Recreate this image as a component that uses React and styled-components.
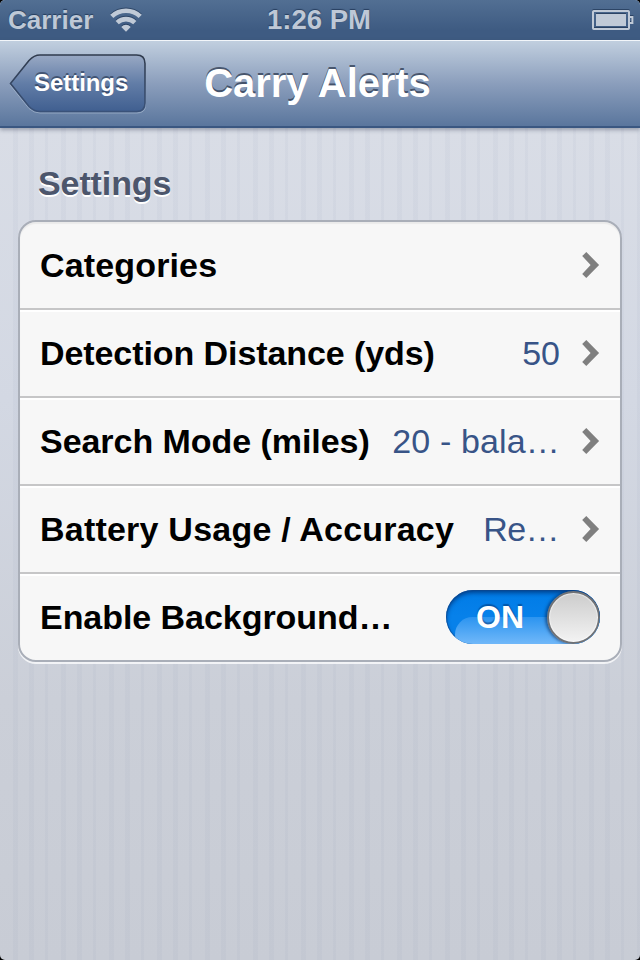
import React from "react";
import styled, { createGlobalStyle } from "styled-components";

const GlobalStyle = createGlobalStyle`
  body { margin: 0; background: #000; }
  * { box-sizing: border-box; }
`;

const Screen = styled.div`
  width: 640px;
  height: 960px;
  overflow: hidden;
  border-radius: 5px;
  display: flex;
  flex-direction: column;
  font-family: "Liberation Sans", Arial, Helvetica, sans-serif;
  background:
    repeating-linear-gradient(90deg, transparent 0 13px, rgba(110, 125, 160, 0.05) 13px 18px, transparent 18px 29px, rgba(110, 125, 160, 0.05) 29px 34px, transparent 34px 45px, rgba(110, 125, 160, 0.05) 45px 48px),
    linear-gradient(#d9dde6 128px, #d3d8e3 400px, #cbcfd8 700px, #c8ccd5);
`;

const StatusBar = styled.header`
  height: 40px;
  flex: none;
  display: grid;
  grid-template-columns: 1fr auto 1fr;
  align-items: center;
  padding: 0 6px 0 8px;
  background: linear-gradient(#526f93, #3e5b82 75%);
  color: #bec8d6;
  font-weight: bold;
  text-shadow: 0 -1px 1px rgba(20, 40, 70, 0.65);
`;

const Network = styled.div`
  display: flex;
  align-items: center;
  gap: 17px;
`;

const Carrier = styled.span`
  font-size: 26px;
  line-height: 40px;
`;

const Clock = styled.span`
  font-size: 27.5px;
  line-height: 40px;
  margin: 0 4px 0 0;
`;

const StatusIcon = styled.svg`
  display: block;
  filter: drop-shadow(0 -1px 0.5px rgba(20, 40, 70, 0.55));
`;

const BatteryIcon = styled(StatusIcon)`
  justify-self: end;
`;

const NavBar = styled.nav`
  height: 88px;
  flex: none;
  display: grid;
  grid-template-columns: 147px 1fr 152px;
  align-items: center;
  border-top: 1px solid #f2f6fa;
  border-bottom: 2px solid #3a5781;
  background: linear-gradient(#c1cfdf, #8b9ebc 50%, #5a769d);
  box-shadow: 0 2px 4px rgba(60, 70, 90, 0.42);
`;

const BackButton = styled.button`
  width: 138px;
  height: 60px;
  margin: 1px 0 0 9px;
  padding: 0;
  border: 0;
  background: none;
  display: grid;
  font: bold 24px "Liberation Sans", Arial, sans-serif;
  color: #fff;
`;

const BackShape = styled.svg`
  grid-area: 1 / 1;
`;

const BackLabel = styled.span`
  grid-area: 1 / 1;
  z-index: 1;
  text-align: left;
  padding-left: 25px;
  line-height: 57px;
  letter-spacing: -0.05px;
  text-shadow: 0 -2px 0 rgba(35, 50, 75, 0.6);
`;

const Title = styled.h1`
  margin: 0;
  text-align: center;
  color: #fff;
  font-size: 40px;
  line-height: 82px;
  padding-bottom: 2px;
  letter-spacing: -0.1px;
  text-shadow: 0 -2px 0 rgba(45, 58, 80, 0.75);
`;

const Content = styled.main`
  padding: 32px 18px 0;
`;

const SectionTitle = styled.h2`
  margin: 0;
  padding-left: 20px;
  height: 60px;
  font-size: 34px;
  line-height: 46px;
  letter-spacing: -0.1px;
  color: #4c566c;
  text-shadow: 0 2px 0 #fff;
`;

const Card = styled.section`
  height: 442px;
  border: 2px solid #a9aeb8;
  border-radius: 18px;
  background: #f7f7f7;
  box-shadow: 0 2px 0 rgba(255, 255, 255, 0.75), inset 0 2px 1px rgba(0, 0, 0, 0.05);
`;

const Row = styled.div`
  height: 88px;
  display: flex;
  align-items: center;
  padding: 0 20px;
  font-size: 34px;
  line-height: 40px;
  white-space: nowrap;
  border-bottom: 2px solid #c6c6c7;

  &:last-child {
    border-color: transparent;
  }
  & + & {
    box-shadow: inset 0 2px 0 #fff;
  }
`;

const Label = styled.span`
  flex: 1;
  font-weight: bold;
  color: #000;
  letter-spacing: ${(p) => p.$tracking || 0}px;
`;

const Value = styled.span`
  color: #385487;
  margin-right: ${(p) => p.$gap || 22}px;
  letter-spacing: ${(p) => p.$tracking || 0}px;
`;

const Toggle = styled.div`
  width: 154px;
  height: 54px;
  border-radius: 27px;
  display: flex;
  align-items: center;
  justify-content: space-between;
  padding-left: 30px;
  font-size: 32px;
  line-height: 54px;
  font-weight: bold;
  color: #fff;
  text-shadow: 0 -2px 1px rgba(0, 55, 120, 0.55);
  background: linear-gradient(#007be6, #0781ea 49%, #0781ea);
  box-shadow: inset 0 0 0 1px rgba(15, 70, 140, 0.6), inset 0 3px 4px rgba(0, 35, 95, 0.65);
  isolation: isolate;
  position: relative;
  overflow: hidden;

  &::before {
    content: "";
    position: absolute;
    z-index: -1;
    left: 9px;
    right: 0;
    top: 27px;
    height: 35px;
    border-radius: 18px 0 0 18px;
    background: linear-gradient(#2b94f0, #6fb7f9 75%);
  }
`;

const Knob = styled.span`
  width: 53px;
  height: 53px;
  border-radius: 50%;
  border: 2px solid #707276;
  background: linear-gradient(#cccccc, #f3f3f3);
  box-shadow: inset 0 0 1px 1px rgba(255, 255, 255, 0.6), -2px 0 3px rgba(0, 25, 70, 0.5);
`;

function Wifi() {
  return (
    <StatusIcon width="32" height="24" viewBox="0 0 32 24" fill="none" stroke="#c0cad7" strokeWidth="4.6">
      <path d="M1.800 8.400C9.800 .9 22.200 .9 30.200 8.400" />
      <path d="M7.200 14.600C12.200 9.900 19.800 9.900 24.800 14.600" />
      <path d="M16 23.700l-4.700-4.700c2.700-3 6.700-3 9.400 0z" fill="#c0cad7" stroke="none" />
    </StatusIcon>
  );
}

function Battery() {
  return (
    <BatteryIcon width="42" height="20" viewBox="0 0 42 20" fill="none" stroke="#c0cad7" strokeWidth="2">
      <rect x="1" y="1" width="36" height="18" rx="0.8" />
      <rect x="4" y="4" width="30" height="12" fill="#c0cad7" stroke="none" />
      <path d="M37 7h3.400v6H37" />
    </BatteryIcon>
  );
}

function Chevron() {
  return (
    <svg width="18" height="28" viewBox="0 0 18 28" fill="#7f7f7f">
      <path d="M4.300 1L17.100 14L4.300 27L.2 22.900L8.600 14L.2 5.100Z" />
    </svg>
  );
}

function Back() {
  return (
    <BackButton>
      <BackShape width="138" height="60" viewBox="0 0 138 60">
        <defs>
          <linearGradient id="back" x2="0" y2="1">
            <stop stopColor="#99a9c4" />
            <stop offset=".5" stopColor="#627da7" />
            <stop offset="1" stopColor="#405f90" />
          </linearGradient>
          <linearGradient id="edge" x2="0" y2="1">
            <stop stopColor="#303b4d" />
            <stop offset="1" stopColor="#3a5279" />
          </linearGradient>
        </defs>
        <path d="M1.500 31.500L20 7.500Q25 2 31 2H128Q136.500 2 136.500 10.500V51Q136.500 59 128 59H31Q25 59 20 54.500Z" fill="none" stroke="#b8c6d9" strokeOpacity=".55" />
        <path d="M1.500 29.500L20 6.500Q25 1 31 1H127.500Q136 1 136 9.500V49Q136 57.500 127.500 57.500H31Q25 57.500 20 52.500Z" fill="url(#back)" stroke="url(#edge)" strokeWidth="1.600" />
      </BackShape>
      <BackLabel>Settings</BackLabel>
    </BackButton>
  );
}

const items = [
  { label: "Categories", tracking: 0.15 },
  { label: "Detection Distance (yds)", tracking: -0.08, value: "50" },
  { label: "Search Mode (miles)", tracking: -0.05, value: "20 - bala…", gap: 22, valueTracking: 0.15 },
  { label: "Battery Usage / Accuracy", tracking: 0.22, value: "Re…", gap: 23, valueTracking: -0.6 },
];

export default function App() {
  return (
    <>
      <GlobalStyle />
      <Screen>
        <StatusBar>
          <Network>
            <Carrier>Carrier</Carrier>
            <Wifi />
          </Network>
          <Clock>1:26 PM</Clock>
          <Battery />
        </StatusBar>
        <NavBar>
          <Back />
          <Title>Carry Alerts</Title>
        </NavBar>
        <Content>
          <SectionTitle>Settings</SectionTitle>
          <Card>
            {items.map((item) => (
              <Row key={item.label}>
                <Label $tracking={item.tracking}>{item.label}</Label>
                {item.value && (
                  <Value $gap={item.gap} $tracking={item.valueTracking}>{item.value}</Value>
                )}
                <Chevron />
              </Row>
            ))}
            <Row>
              <Label $tracking={-0.05}>Enable Background…</Label>
              <Toggle>
                ON
                <Knob />
              </Toggle>
            </Row>
          </Card>
        </Content>
      </Screen>
    </>
  );
}
